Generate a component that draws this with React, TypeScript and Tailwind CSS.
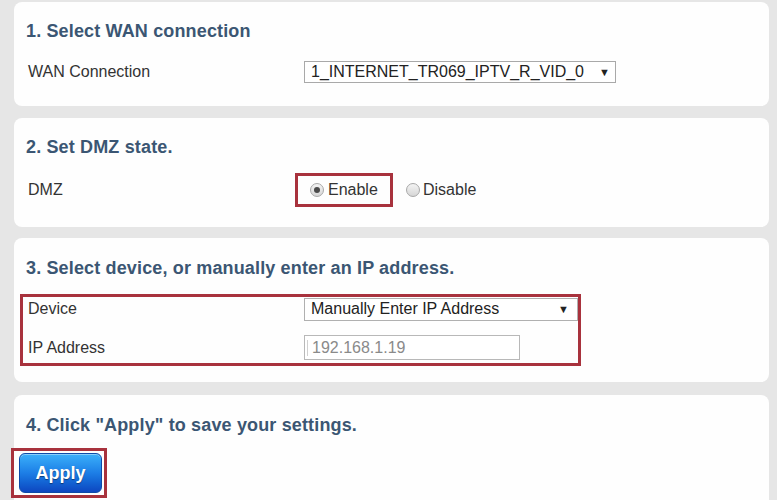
import React from 'react';

const font = { fontFamily: '"Liberation Sans", Arial, sans-serif' };

const Card: React.FC<{ className?: string; children: React.ReactNode }> = ({ className = '', children }) => (
  <div className={`bg-[#fefefe] rounded-[8px] pl-[12px] pr-[14px] ${className}`}>{children}</div>
);

const Heading: React.FC<{ children: React.ReactNode }> = ({ children }) => (
  <h2 className="text-[18px] leading-[24px] font-bold text-[#3b5673] tracking-[0.15px]">{children}</h2>
);

const Radio: React.FC<{ checked?: boolean }> = ({ checked }) => (
  <span className="w-[14px] h-[14px] rounded-full border border-[#a8a8a8] bg-gradient-to-b from-[#f4f4f4] to-[#d6d6d6] flex items-center justify-center shrink-0">
    {checked && <span className="w-[6px] h-[6px] rounded-full bg-[#4a4a4a]" />}
  </span>
);

export default function App() {
  return (
    <div className="min-h-screen bg-[#e6e6e6] pt-[2px] overflow-hidden" style={font}>
      <div className="ml-[14px] w-[755px] flex flex-col">
        {/* 1 */}
        <Card className="pt-[17px] pb-[23px]">
          <Heading>1. Select WAN connection</Heading>
          <div className="mt-[18px] flex items-center h-[22px]">
            <span className="w-[278px] pl-[2px] text-[16px] text-[#333]">WAN Connection</span>
            <div className="h-[22px] w-[312px] border border-[#a9a9a9] bg-white flex items-center justify-between pl-[6px] pr-[5px]">
              <span className="text-[16px] text-[#222] leading-none">1_INTERNET_TR069_IPTV_R_VID_0</span>
              <span className="text-[11px] text-[#222] leading-none">▼</span>
            </div>
          </div>
        </Card>

        {/* 2 */}
        <Card className="mt-[12px] pt-[17px] pb-[20px]">
          <Heading>2. Set DMZ state.</Heading>
          <div className="mt-[14px] flex items-center h-[34px]">
            <span className="w-[269px] pl-[2px] text-[16px] text-[#333]">DMZ</span>
            <div className="h-[34px] w-[98px] border-[3px] border-[#a8323d] flex items-center gap-[4px] pl-[12px]">
              <Radio checked />
              <span className="text-[16px] text-[#333]">Enable</span>
            </div>
            <div className="flex items-center gap-[3px] ml-[13px]">
              <Radio />
              <span className="text-[16px] text-[#333]">Disable</span>
            </div>
          </div>
        </Card>

        {/* 3 */}
        <Card className="mt-[11px] pt-[18px] pb-[16px]">
          <Heading>3. Select device, or manually enter an IP address.</Heading>
          <div className="mt-[14px] -ml-[6px] w-[561px] border-[3px] border-[#a8323d] flex flex-col pb-[3px]">
            <div className="flex items-center h-[24px]">
              <span className="w-[281px] pl-[5px] text-[16px] text-[#333]">Device</span>
              <div className="h-[23px] flex-1 border border-[#b0b0b0] bg-white flex items-center justify-between pl-[6px] pr-[8px]">
                <span className="text-[16px] text-[#222] leading-none">Manually Enter IP Address</span>
                <span className="text-[11px] text-[#222] leading-none">▼</span>
              </div>
            </div>
            <div className="flex items-center h-[25px] mt-[14px]">
              <span className="w-[281px] pl-[5px] text-[16px] text-[#333]">IP Address</span>
              <div className="h-[25px] w-[216px] border border-[#b8b8b8] bg-white flex items-center pl-[2px]">
                <span className="w-px h-[16px] bg-[#d0d0d0] mr-[4px]" />
                <span className="text-[16px] text-[#8a8a8a] leading-none">192.168.1.19</span>
              </div>
            </div>
          </div>
        </Card>

        {/* 4 */}
        <Card className="mt-[13px] pt-[18px] pb-[10px] rounded-b-none">
          <Heading>4. Click "Apply" to save your settings.</Heading>
          <div className="mt-[11px] -ml-[15px] w-[96px] h-[50px] border-[3px] border-[#a8323d] flex items-start pt-[2px] pl-[5px]">
            <button className="w-[83px] h-[40px] rounded-[6px] border border-[#0d4aa8] bg-gradient-to-b from-[#3cb0fa] via-[#1d7ee6] to-[#0f46c0] text-white text-[18px] font-bold shadow-[inset_0_1px_0_rgba(255,255,255,0.4)] [text-shadow:0_1px_1px_rgba(0,0,0,0.45)]">
              Apply
            </button>
          </div>
        </Card>
      </div>
    </div>
  );
}
